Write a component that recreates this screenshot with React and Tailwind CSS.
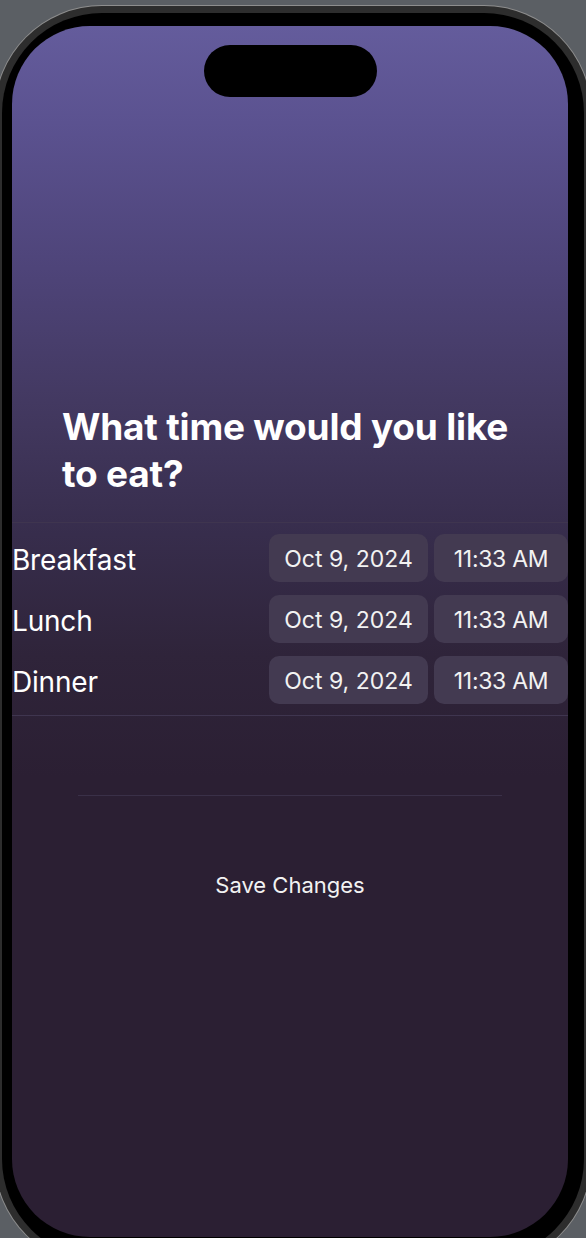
export default function App() {
  const meals = ["Breakfast", "Lunch", "Dinner"];
  return (
    <div
      className="w-[586px] h-[1238px] overflow-hidden bg-[#5b5f64]"
      style={{ fontFamily: "Inter, 'Noto Sans', sans-serif" }}
    >
      <div className="mt-[5px] ml-[-6px] w-[598px] h-[1262px] rounded-[108px] bg-[#8e8e8e] p-[1px]">
        <div className="w-full h-full rounded-[107px] bg-[#2d2d2d] p-[7px]">
          <div className="w-full h-full rounded-[100px] bg-black pt-[13px] pl-[10px]">
            <div className="w-[556px] h-[1211px] rounded-[78px] overflow-hidden bg-[linear-gradient(180deg,#645c9c_0%,#5b5290_8%,#4e4479_20%,#42385f_32%,#372d4c_42%,#2f243a_52%,#2b1f33_62%,#2b1f33_100%)] flex flex-col">
              <div className="mt-[19px] mx-auto w-[173px] h-[52px] rounded-full bg-black shrink-0" />
              <h1 className="mt-[306px] pl-[50px] pr-[30px] text-[37px] leading-[47px] font-bold text-white tracking-[-0.2px]">
                What time would you like<br />to eat?
              </h1>
              <div className="mt-[25px] border-t border-[#3f354f] border-b py-[11px] flex flex-col gap-[13px]">
                {meals.map((m) => (
                  <div key={m} className="flex items-center h-[48px]">
                    <span className="text-[28px] text-white flex-1 tracking-[-0.2px] pt-[3px]">{m}</span>
                    <div className="flex gap-[6px]">
                      <div className="w-[159px] h-[48px] rounded-[10px] bg-[#433a51] flex items-center justify-center text-[23px] text-[#f2f2f2] pt-[3px]">
                        Oct 9, 2024
                      </div>
                      <div className="w-[134px] h-[48px] rounded-[10px] bg-[#433a51] flex items-center justify-center text-[23px] text-[#f2f2f2] pt-[3px] tracking-[-0.3px]">
                        11:33 AM
                      </div>
                    </div>
                  </div>
                ))}
              </div>
              <div className="mt-[79px] mx-[66px] h-px bg-[#3a3048]" />
              <div className="mt-[73px] text-center text-[22px] text-[#f2f2f2]">Save Changes</div>
            </div>
          </div>
        </div>
      </div>
    </div>
  );
}
